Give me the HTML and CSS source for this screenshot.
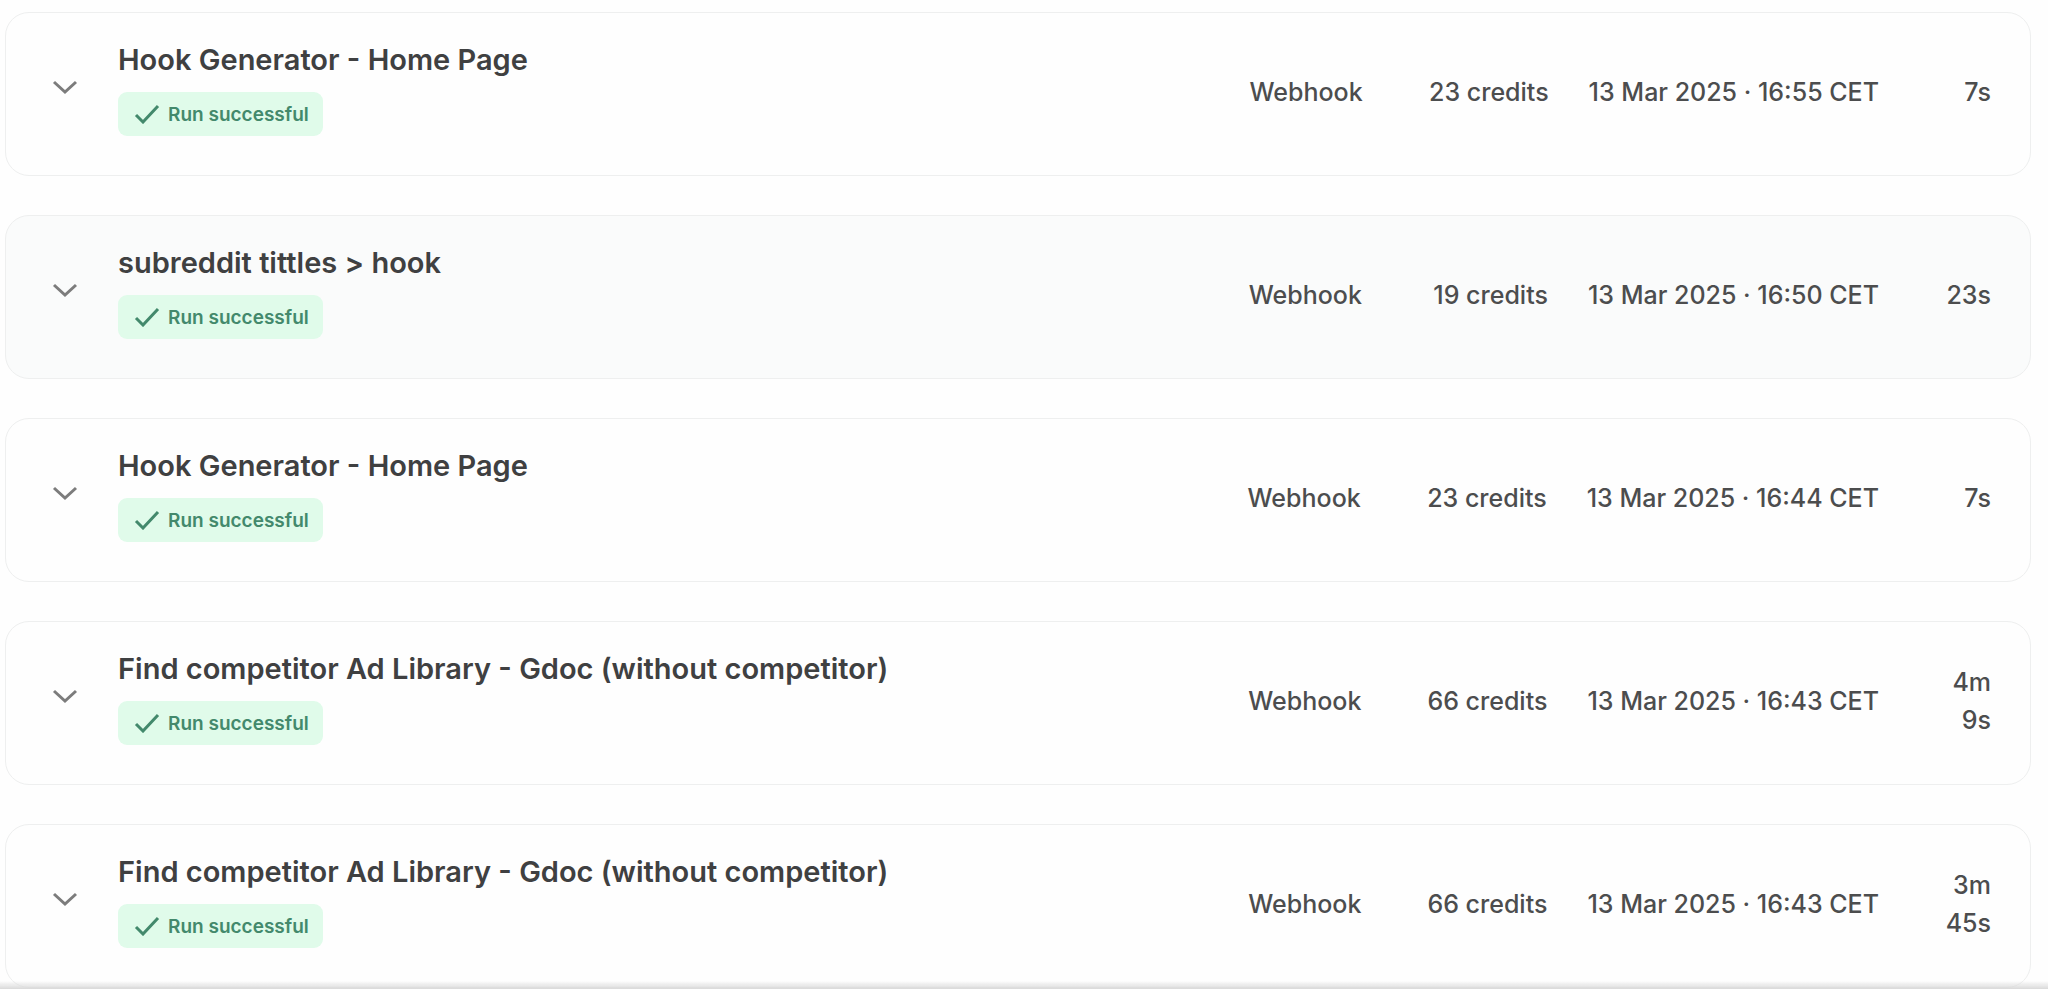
FILE: index.html
```html
<!DOCTYPE html>
<html lang="en">
<head>
    <meta charset="UTF-8">
    <meta name="viewport" content="width=device-width, initial-scale=1.0">
    <title>Runs</title>
    <link rel="stylesheet" href="styles.css">
</head>
<body>
    <!-- Shared icons -->
    <svg class="sprite" aria-hidden="true">
        <symbol id="chevron" viewBox="0 0 28 16">
            <path d="M3 3 L14 13 L25 3" />
        </symbol>
        <symbol id="check" viewBox="0 0 26 20">
            <path d="M2 11 L9 18 L24 2" />
        </symbol>
    </svg>

    <main class="runs">
        <article class="run">
            <button class="toggle" type="button" aria-label="Show run details">
                <svg class="chevron"><use href="#chevron" /></svg>
            </button>
            <div class="info">
                <h2>Hook Generator - Home Page</h2>
                <span class="badge"><svg class="check"><use href="#check" /></svg>Run successful</span>
            </div>
            <div class="meta">
                <span>Webhook</span>
                <span class="credits">23 credits</span>
                <time datetime="2025-03-13T16:55+01:00">13 Mar 2025 · 16:55 CET</time>
                <span class="duration">7s</span>
            </div>
        </article>

        <article class="run active">
            <button class="toggle" type="button" aria-label="Show run details">
                <svg class="chevron"><use href="#chevron" /></svg>
            </button>
            <div class="info">
                <h2>subreddit tittles &gt; hook</h2>
                <span class="badge"><svg class="check"><use href="#check" /></svg>Run successful</span>
            </div>
            <div class="meta">
                <span>Webhook</span>
                <span class="credits">19 credits</span>
                <time datetime="2025-03-13T16:50+01:00">13 Mar 2025 · 16:50 CET</time>
                <span class="duration">23s</span>
            </div>
        </article>

        <article class="run">
            <button class="toggle" type="button" aria-label="Show run details">
                <svg class="chevron"><use href="#chevron" /></svg>
            </button>
            <div class="info">
                <h2>Hook Generator - Home Page</h2>
                <span class="badge"><svg class="check"><use href="#check" /></svg>Run successful</span>
            </div>
            <div class="meta">
                <span>Webhook</span>
                <span class="credits">23 credits</span>
                <time datetime="2025-03-13T16:44+01:00">13 Mar 2025 · 16:44 CET</time>
                <span class="duration">7s</span>
            </div>
        </article>

        <article class="run">
            <button class="toggle" type="button" aria-label="Show run details">
                <svg class="chevron"><use href="#chevron" /></svg>
            </button>
            <div class="info">
                <h2>Find competitor Ad Library - Gdoc (without competitor)</h2>
                <span class="badge"><svg class="check"><use href="#check" /></svg>Run successful</span>
            </div>
            <div class="meta">
                <span>Webhook</span>
                <span class="credits">66 credits</span>
                <time datetime="2025-03-13T16:43+01:00">13 Mar 2025 · 16:43 CET</time>
                <span class="duration">4m 9s</span>
            </div>
        </article>

        <article class="run">
            <button class="toggle" type="button" aria-label="Show run details">
                <svg class="chevron"><use href="#chevron" /></svg>
            </button>
            <div class="info">
                <h2>Find competitor Ad Library - Gdoc (without competitor)</h2>
                <span class="badge"><svg class="check"><use href="#check" /></svg>Run successful</span>
            </div>
            <div class="meta">
                <span>Webhook</span>
                <span class="credits">66 credits</span>
                <time datetime="2025-03-13T16:43+01:00">13 Mar 2025 · 16:43 CET</time>
                <span class="duration">3m 45s</span>
            </div>
        </article>
    </main>
    <div class="bottom-shade"></div>
</body>
</html>
```
FILE: styles.css
```css
* {
    box-sizing: border-box;
}

body {
    margin: 0;
    background: #fefefe;
    color: #3f4041;
    font-family: Inter, "Liberation Sans", sans-serif;
}

.sprite {
    position: absolute;
    width: 0;
    height: 0;
}

.runs {
    display: flex;
    flex-direction: column;
    gap: 39px;
    padding: 12px 17px 0 5px;
}

.run {
    display: flex;
    align-items: center;
    padding: 29px 39px 33px 45px;
    border: 1px solid #eeefef;
    border-radius: 24px;
    background: #fefefe;
}

.run.active {
    background: #fafbfb;
}

.toggle {
    display: flex;
    margin: 0 39px 0 0;
    padding: 0 0 10px;
    border: none;
    background: none;
    cursor: pointer;
}

.chevron {
    width: 28px;
    height: 16px;
    fill: none;
    stroke: #7c7c7c;
    stroke-width: 3;
}

.info {
    display: flex;
    flex: 1;
    flex-direction: column;
    align-items: flex-start;
    gap: 14px;
    padding-bottom: 6px;
}

.info h2 {
    margin: 0;
    font-size: 29px;
    font-weight: 600;
    line-height: 36px;
}

.badge {
    display: flex;
    align-items: center;
    gap: 8px;
    height: 44px;
    padding: 0 14px 0 16px;
    border-radius: 9px;
    background: #e0fbea;
    color: #43896c;
    font-size: 19px;
    font-weight: 600;
}

.check {
    width: 26px;
    height: 20px;
    fill: none;
    stroke: #43896c;
    stroke-width: 3;
}

.meta {
    display: flex;
    align-items: center;
    gap: 40px;
    color: #4c4d4e;
    font-size: 25px;
    font-weight: 500;
    line-height: 38px;
    text-align: right;
    white-space: nowrap;
}

.credits {
    width: 146px;
}

.duration {
    width: 72px;
    white-space: normal;
}

/* fade where the list runs under the window edge */
.bottom-shade {
    position: fixed;
    right: 0;
    bottom: 0;
    left: 0;
    height: 8px;
    background: linear-gradient(rgba(215, 215, 215, 0), #d9d9d9);
}
```
